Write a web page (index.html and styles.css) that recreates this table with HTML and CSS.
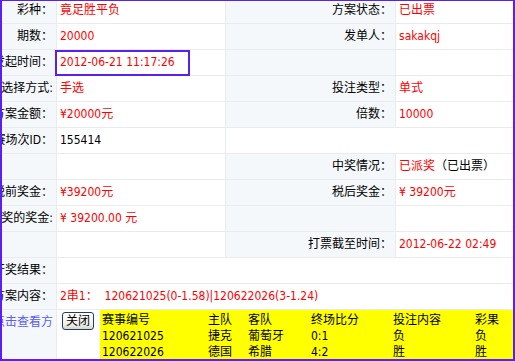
FILE: index.html
```html
<!DOCTYPE html>
<html lang="zh-CN">
<head>
<meta charset="utf-8">
<title>方案详情</title>
<link rel="stylesheet" href="styles.css">
</head>
<body>
<div class="frame">
  <div class="grid">
    <div class="lb">彩种：</div><div class="val red">竟足胜平负</div><div class="lb">方案状态：</div><div class="val red">已出票</div>
    <div class="lb">期数：</div><div class="val red">20000</div><div class="lb">发单人：</div><div class="val red">sakakqj</div>
    <div class="lb">发起时间：</div><div class="val red">2012-06-21 11:17:26</div><div class="lb"></div><div class="val"></div>
    <div class="lb">选择方式:</div><div class="val red">手选</div><div class="lb">投注类型：</div><div class="val red">单式</div>
    <div class="lb">方案金额：</div><div class="val red">¥20000元</div><div class="lb">倍数：</div><div class="val red">10000</div>
    <div class="lb">比赛场次ID：</div><div class="val">155414</div><div class="val span2"></div>
    <div class="lb"></div><div class="val"></div><div class="lb">中奖情况：</div><div class="val"><span class="red">已派奖</span>（已出票）</div>
    <div class="lb">税前奖金：</div><div class="val red">¥39200元</div><div class="lb">税后奖金：</div><div class="val red">¥ 39200元</div>
    <div class="lb">中奖的奖金:</div><div class="val red">¥ 39200.00 元</div><div class="lb"></div><div class="val"></div>
    <div class="lb"></div><div class="val"></div><div class="lb">打票截至时间：</div><div class="val red">2012-06-22 02:49</div>
    <div class="lb">开奖结果：</div><div class="val span3"></div>
    <div class="lb">方案内容：</div><div class="val span3 red">2串1：&nbsp;&nbsp;120621025(0-1.58)|120622026(3-1.24)</div>
    <div class="lb"><a class="link" href="#">点击查看方</a></div>
    <div class="val span3 last">
      <button class="btn" type="button">关闭</button>
      <div class="yt">
        <div class="yr"><span>赛事编号</span><span>主队</span><span>客队</span><span>终场比分</span><span>投注内容</span><span>彩果</span></div>
        <div class="yr"><span>120621025</span><span>捷克</span><span>葡萄牙</span><span>0:1</span><span>负</span><span>负</span></div>
        <div class="yr"><span>120622026</span><span>德国</span><span>希腊</span><span>4:2</span><span>胜</span><span>胜</span></div>
      </div>
    </div>
  </div>
  <div class="mark"></div>
</div>
</body>
</html>
```
FILE: styles.css
```css
* { box-sizing: border-box; }
html, body { margin: 0; padding: 0; background: #fff; }
body {
  font-family: "DejaVu Sans Condensed", "Noto Sans", "Noto Sans CJK SC", sans-serif;
  font-size: 12px;
  color: #000;
}
.frame {
  position: relative;
  width: 515px;
  height: 361px;
  border: 2px solid #5a20f0;
  border-top-width: 1px;
  overflow: hidden;
}
.grid {
  display: grid;
  grid-template-columns: 54px 168px 169px 117px;
  grid-template-rows: repeat(12, 25px) 60px;
  gap: 1px;
  background: #e9ebee;
  margin-top: -3px;
}
.lb {
  background: #f5f8fb;
  display: flex;
  justify-content: flex-end;
  align-items: flex-start;
  white-space: nowrap;
  padding-right: 3px;
  line-height: 25px;
}
.val {
  background: #fff;
  padding-left: 3px;
  line-height: 25px;
  white-space: nowrap;
}
.span2 { grid-column: span 2; }
.span3 { grid-column: span 3; }
.red { color: #f00; }
.link { color: #5c5cf0; text-decoration: none; }
.last {
  display: flex;
  align-items: flex-start;
  padding-left: 0;
  line-height: 16px;
}
.btn {
  margin: 2px 0 0 5px;
  width: 32px;
  height: 18px;
  padding: 0;
  border: 1px solid #1f3f6a;
  border-radius: 3px;
  background: linear-gradient(#ffffff, #f1f0ea 70%, #d8d4c8);
  font-family: inherit;
  font-size: 12px;
  line-height: 16px;
  color: #000;
}
.yt {
  flex: 1;
  margin-left: 6px;
  background: #ff0;
  padding: 2px 0 0 2px;
  height: 60px;
}
.yr {
  display: grid;
  grid-template-columns: 106px 40px 63px 82px 82px auto;
  line-height: 16px;
}
.mark {
  position: absolute;
  left: 53px;
  top: 49px;
  width: 135px;
  height: 26px;
  border: 2px solid #5a20f0;
}
```
